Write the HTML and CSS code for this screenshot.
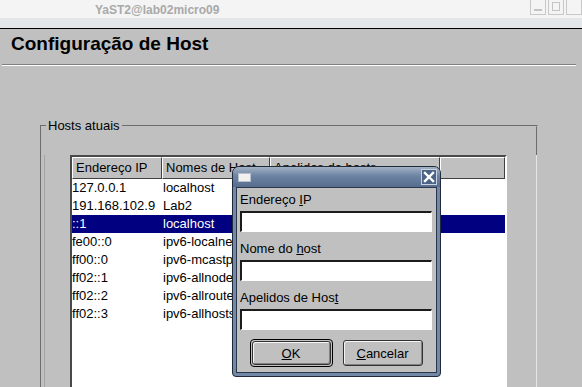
FILE: index.html
```html
<!DOCTYPE html>
<html lang="pt">
<head>
    <meta charset="UTF-8">
    <title>YaST2@lab02micro09</title>
    <link rel="stylesheet" href="styles.css">
</head>
<body>
<div class="window">
    <div class="titlebar">
        <span class="title">YaST2@lab02micro09</span>
        <div class="wm-buttons">
            <span class="wm-btn wm-min"></span>
            <span class="wm-btn wm-max"></span>
            <span class="wm-btn"></span>
        </div>
    </div>
    <div class="titlestrip"></div>

    <div class="main">
        <h1 class="heading">Configuração de Host</h1>
        <div class="separator"></div>

        <fieldset class="group">
            <legend>Hosts atuais</legend>
            <div class="group-inner">
                <div class="listview">
                    <div class="lv-head">
                        <div class="lv-col c1">Endereço IP</div>
                        <div class="lv-col c2">Nomes de Host</div>
                        <div class="lv-col c3">Apelidos de hosts</div>
                        <div class="lv-col c4"></div>
                    </div>
                    <div class="lv-row"><span class="c1">127.0.0.1</span><span class="c2">localhost</span><span class="c3"></span></div>
                    <div class="lv-row"><span class="c1">191.168.102.9</span><span class="c2">Lab2</span><span class="c3"></span></div>
                    <div class="lv-row selected"><span class="c1">::1</span><span class="c2">localhost</span><span class="c3"></span></div>
                    <div class="lv-row"><span class="c1">fe00::0</span><span class="c2">ipv6-localnet</span><span class="c3"></span></div>
                    <div class="lv-row"><span class="c1">ff00::0</span><span class="c2">ipv6-mcastprefix</span><span class="c3"></span></div>
                    <div class="lv-row"><span class="c1">ff02::1</span><span class="c2">ipv6-allnodes</span><span class="c3"></span></div>
                    <div class="lv-row"><span class="c1">ff02::2</span><span class="c2">ipv6-allrouters</span><span class="c3"></span></div>
                    <div class="lv-row"><span class="c1">ff02::3</span><span class="c2">ipv6-allhosts</span><span class="c3"></span></div>
                </div>
            </div>
        </fieldset>
    </div>

    <!-- popup over the host table -->
    <div class="dialog">
        <div class="dlg-title">
            <span class="dlg-icon"></span>
            <svg class="dlg-close" width="16" height="16" viewBox="0 0 16 16">
                <rect x="0.5" y="0.5" width="15" height="15" fill="#4d6488" stroke="#c9d2de"/>
                <path d="M4 4 L12 12 M12 4 L4 12" stroke="#fff" stroke-width="2.4" stroke-linecap="square"/>
            </svg>
        </div>
        <div class="dlg-body">
            <label class="field-label">Endereço <u>I</u>P</label>
            <input class="field" type="text">
            <label class="field-label">Nome do <u>h</u>ost</label>
            <input class="field" type="text">
            <label class="field-label">Apelidos de Hos<u>t</u></label>
            <input class="field" type="text">
            <div class="buttons">
                <div class="btn-default"><button class="btn"><u>O</u>K</button></div>
                <button class="btn btn-cancel"><u>C</u>ancelar</button>
            </div>
        </div>
    </div>
</div>
</body>
</html>
```

FILE: styles.css
```css
*{
    margin:0;
    padding:0;
    box-sizing:border-box;
}
body{
    width:582px;
    height:387px;
    overflow:hidden;
    background-color:#c0c0c0;
    font-family:"Liberation Sans", Arial, sans-serif;
    font-size:13px;
    color:#000;
}
.window{
    position:relative;
    width:582px;
    height:387px;
    display:flex;
    flex-direction:column;
    overflow:hidden;
}

/* window manager title */
.titlebar{
    flex-shrink:0;
    height:18px;
    display:flex;
    align-items:center;
    background-color:#f4f4f4;
}
.title{
    padding-left:95px;
    padding-top:1px;
    font-size:12px;
    font-weight:bold;
    color:#a9a9a9;
}
.wm-buttons{
    margin-left:auto;
    align-self:flex-start;
    display:flex;
    gap:2px;
}
.wm-btn{
    width:16px;
    height:15px;
    border:1px solid #c8c8c8;
    border-top:none;
    position:relative;
}
.wm-min::after{
    content:"";
    position:absolute;
    left:3px;
    right:3px;
    bottom:3px;
    border-top:2px solid #c4c4c4;
}
.wm-max::after{
    content:"";
    position:absolute;
    left:3px;
    right:3px;
    top:2px;
    bottom:3px;
    border:1px solid #c4c4c4;
}
.titlestrip{
    flex-shrink:0;
    height:11px;
    background-color:#e4e7ea;
    border-bottom:1px solid #000;
}

/* main dialog area */
.main{
    flex:1;
    min-height:0;
    overflow:hidden;
    background-color:#c0c0c0;
}
.heading{
    margin:4px 0 0 11px;
    font-size:19px;
    line-height:22px;
    font-weight:bold;
}
.separator{
    margin:9px 6px 0 2px;
    border-top:1px solid #808080;
    border-bottom:1px solid #fff;
}
.group{
    margin:52px 0 0 40px;
    width:498px;
    height:400px;
    border:2px groove #c0c0c0;
}
.group legend{
    margin-left:4px;
    padding:0 2px;
    line-height:15px;
}
.group-inner{
    margin:2px 0 0 2px;
    height:300px;
    border-left:1px solid #a4a4a4;
    box-shadow:1px 0 #e6e6e6;
}

/* host table */
.listview{
    margin:22px 0 0 25px;
    width:437px;
    height:300px;
    background-color:#fff;
    border:2px solid;
    border-color:#4a4a4a #fff #fff #4a4a4a;
}
.lv-head{
    display:flex;
    height:22px;
    background-color:#c0c0c0;
}
.lv-col{
    border:1px solid;
    border-color:#fff #404040 #404040 #fff;
    padding:0 3px;
    line-height:20px;
    white-space:nowrap;
    overflow:hidden;
}
.c1{ width:90px; }
.c2{ width:108px; }
.c3{ width:170px; }
.c4{ flex:1; }
.lv-row{
    display:flex;
    height:18px;
    line-height:18px;
}
.lv-row span{
    white-space:nowrap;
    overflow:hidden;
}
.lv-row .c2{
    padding-left:1px;
}
.lv-row.selected{
    background-color:#000080;
    color:#fff;
}

/* popup */
.dialog{
    position:absolute;
    left:232px;
    top:166px;
    width:209px;
    height:211px;
    display:flex;
    flex-direction:column;
    padding:0 3px 3px;
    background-color:#7288a6;
    border:1px solid #1f2a3a;
    border-radius:7px 7px 4px 4px;
}
.dlg-title{
    flex-shrink:0;
    height:20px;
    margin:0 -3px;
    padding:0 3px 0 5px;
    display:flex;
    align-items:center;
    justify-content:space-between;
    border-radius:6px 6px 0 0;
    background:linear-gradient(#a3b1c4, #6c83a3 45%, #566d8e);
}
.dlg-icon{
    width:13px;
    height:9px;
    background-color:#f0f0f0;
    border:1px solid #b8c0cc;
}
.dlg-body{
    flex:1;
    min-height:0;
    display:flex;
    flex-direction:column;
    padding:4px 4px 0 3px;
    background-color:#c0c0c0;
    border:1px solid #2b3648;
}
.field-label{
    flex-shrink:0;
    height:16px;
    line-height:16px;
    margin-bottom:3px;
}
.field{
    flex-shrink:0;
    height:21px;
    margin-bottom:9px;
    background-color:#fff;
    border-style:solid;
    border-width:2px 1px 1px 2px;
    border-color:#1c1c1c #fff #fff #1c1c1c;
    outline:none;
}
.buttons{
    flex-shrink:0;
    height:28px;
    display:flex;
    align-items:center;
    justify-content:center;
    gap:10px;
}
.btn-default{
    width:83px;
    height:28px;
    padding:1px;
    border:1px solid #000;
    border-radius:4px;
}
.btn{
    width:100%;
    height:100%;
    font-family:inherit;
    font-size:13px;
    color:#000;
    background-color:#c0c0c0;
    border:1px solid #333;
    border-radius:3px;
    box-shadow:inset 1px 1px #f4f4f4, inset -1px -1px #808080;
}
.btn-cancel{
    width:80px;
    height:26px;
}
```
